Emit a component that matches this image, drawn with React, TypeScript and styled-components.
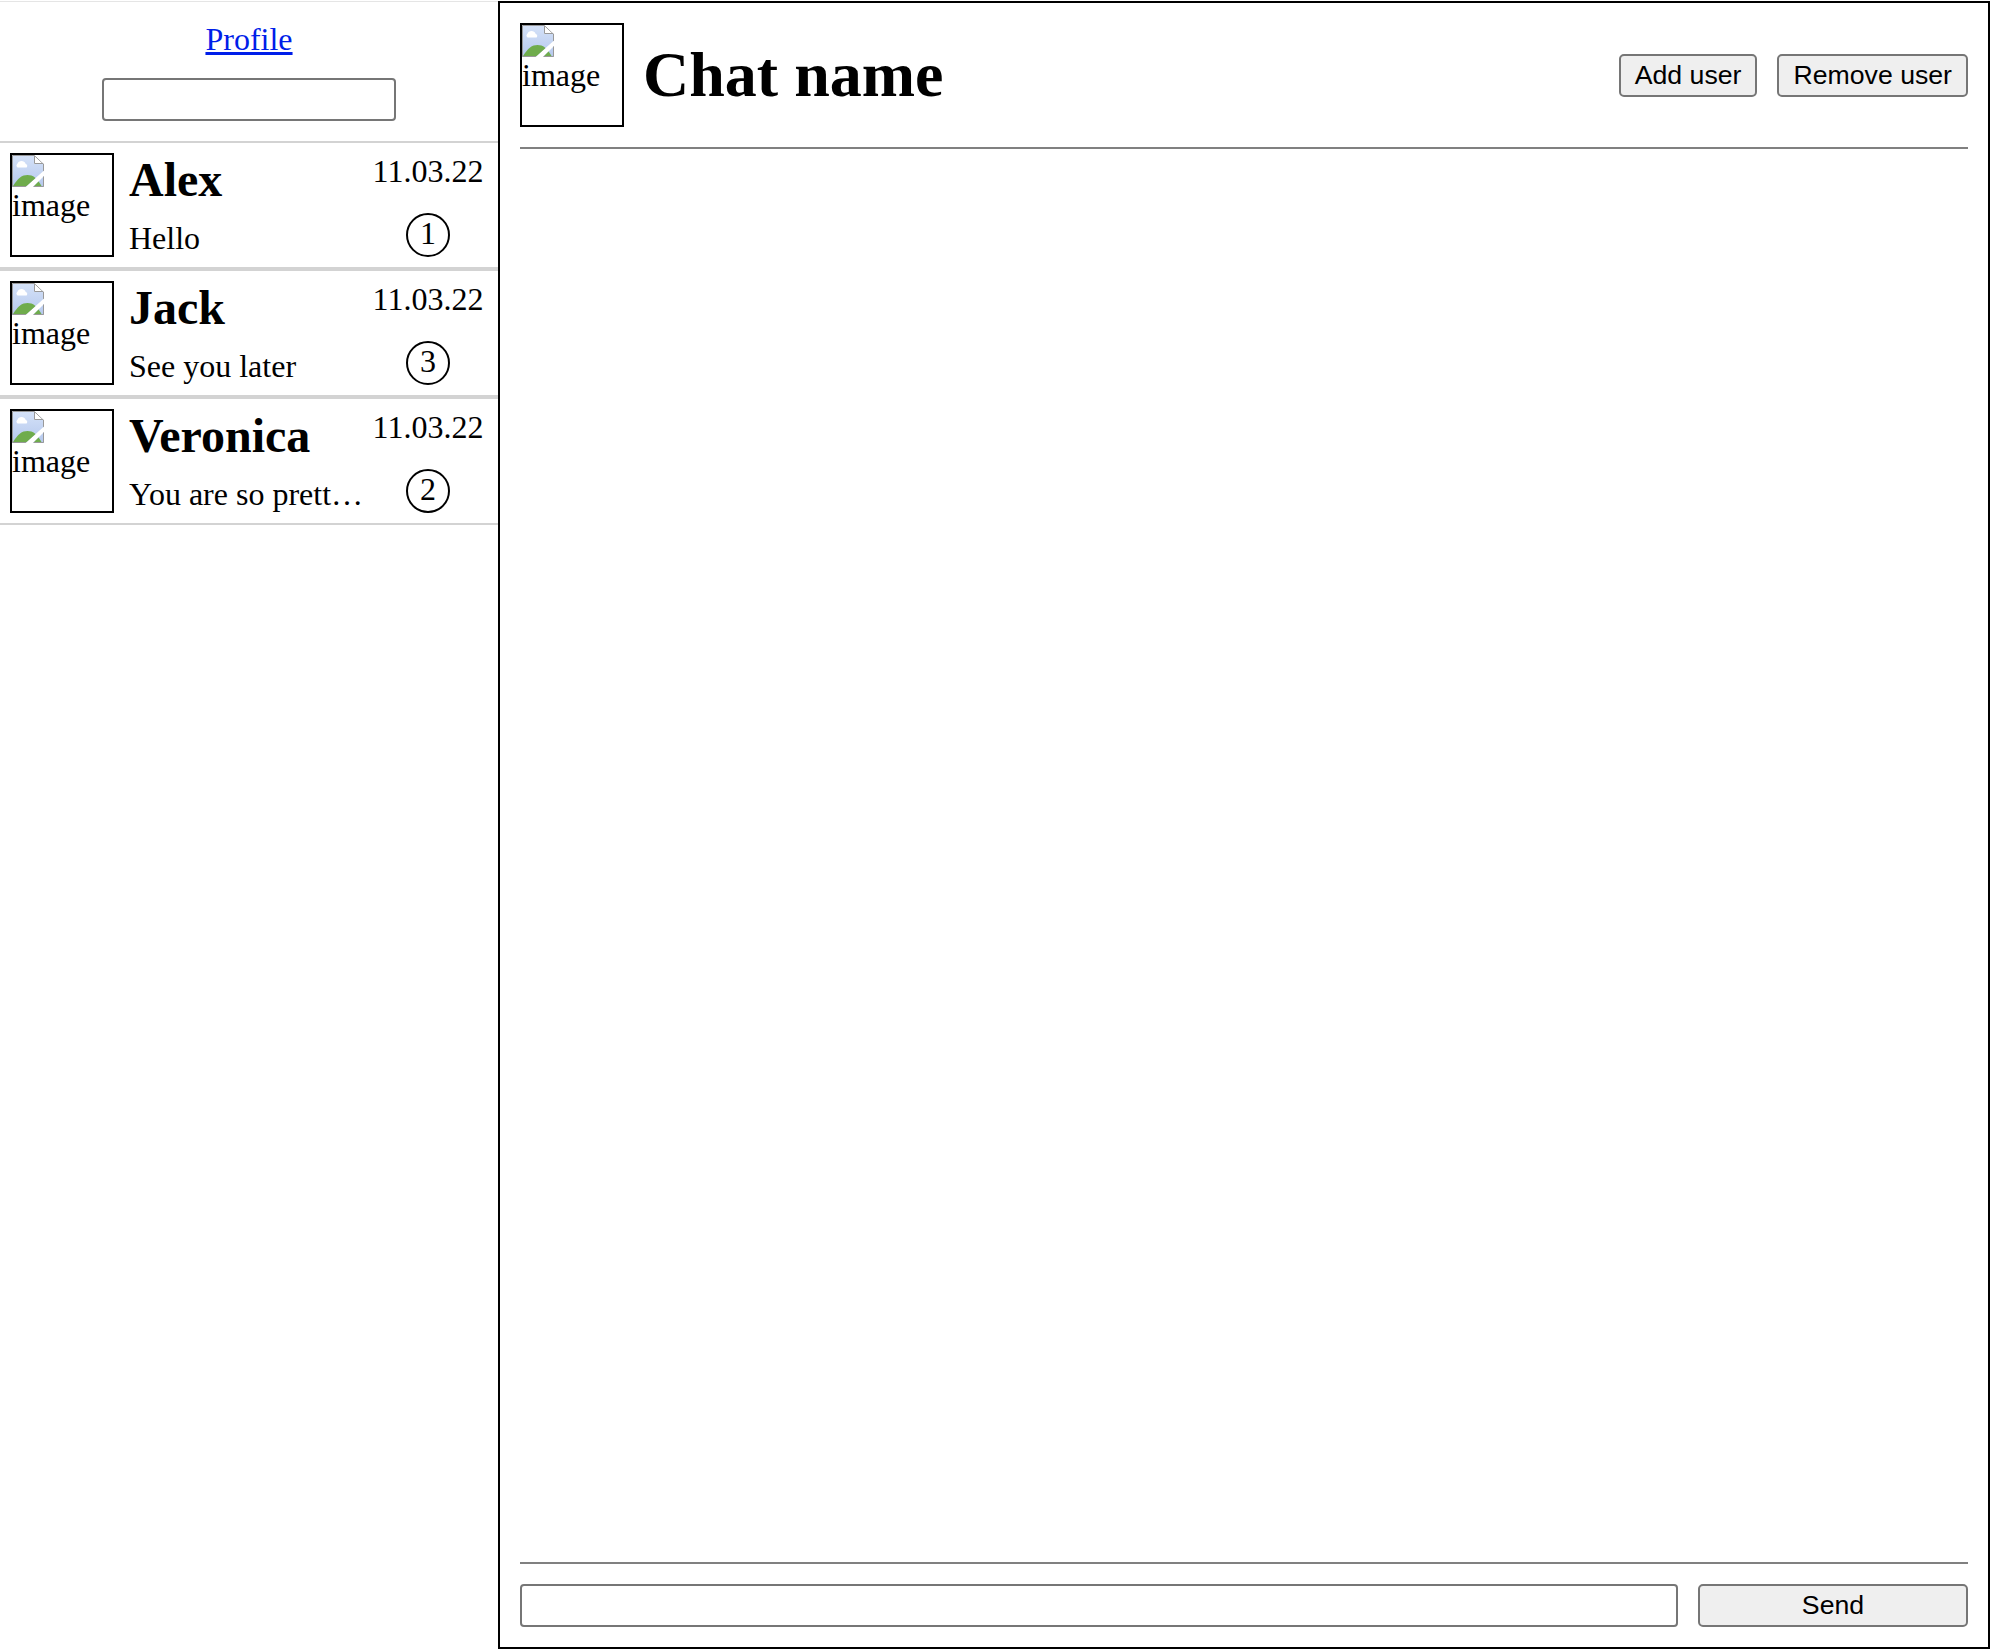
import React from 'react';
import styled, { createGlobalStyle } from 'styled-components';

const GlobalStyle = createGlobalStyle`
  *, *::before, *::after { box-sizing: border-box; }
  body {
    margin: 0;
    background: #fff;
    color: #000;
    font-family: "Liberation Serif", "Times New Roman", serif;
    font-size: 32px;
    line-height: 36px;
  }
`;

const Page = styled.div`
  display: grid;
  grid-template-columns: 498px 1fr;
  height: 1649px;
  padding-top: 1px;
`;

const Sidebar = styled.aside`
  display: flex;
  flex-direction: column;
  border-top: 1px solid #e5e5e5;
`;

const SidebarTop = styled.div`
  display: flex;
  flex-direction: column;
  align-items: center;
  gap: 21px;
  padding: 19px 0 20px;
`;

const ProfileLink = styled.a`
  color: #001ee9;
  text-decoration: underline;
  text-decoration-thickness: 3px;
  text-underline-offset: 2px;
`;

const TextField = styled.input<{ $width?: string }>`
  width: ${({ $width }) => $width ?? 'auto'};
  min-width: 0;
  height: 43px;
  padding: 2px 4px;
  border: 2px solid #767676;
  border-radius: 4px;
  background: #fff;
  font: 26.67px "Liberation Sans", Arial, sans-serif;
  outline: none;
`;

const ChatList = styled.ul`
  margin: 0;
  padding: 0;
  list-style: none;
`;

const ChatItem = styled.li`
  display: flex;
  height: 128px;
  padding: 10px 14px 10px 10px;
  border: solid #d3d3d3;
  border-width: 2px 0;
`;

const AvatarFrame = styled.div<{ $indent?: number }>`
  flex: none;
  width: 104px;
  height: 104px;
  border: 2px solid #000;
  text-indent: ${({ $indent }) => $indent ?? 0}px;

  svg { display: block; }
`;

const ChatText = styled.div`
  flex: 1;
  min-width: 0;
  display: flex;
  flex-direction: column;
  justify-content: space-between;
  padding-bottom: 1px;
  margin-left: 15px;
`;

const ChatTitle = styled.h2`
  margin: 0;
  font-size: 48px;
  line-height: 54px;
`;

const LastMessage = styled.p`
  margin: 0;
  overflow: hidden;
  white-space: nowrap;
  text-overflow: ellipsis;
`;

const ChatMeta = styled.div`
  flex: none;
  width: 112px;
  display: flex;
  flex-direction: column;
  align-items: center;
  justify-content: space-between;
`;

const Unread = styled.span`
  width: 44px;
  height: 44px;
  border: 2px solid #000;
  border-radius: 50%;
  text-align: center;
`;

const Chat = styled.main`
  display: flex;
  flex-direction: column;
  border: 2px solid #000;
  padding: 20px;
`;

const ChatHeader = styled.header`
  display: flex;
  align-items: center;
  gap: 20px;
  padding-bottom: 20px;
  border-bottom: 2px solid #808080;
`;

const ChatName = styled.h1`
  flex: 1;
  margin: 0 0 0 -1px;
  font-size: 64px;
  line-height: 72px;
`;

const Messages = styled.section`
  flex: 1;
`;

const Composer = styled.form`
  display: grid;
  grid-template-columns: 1fr 270px;
  gap: 20px;
  padding-top: 20px;
  border-top: 2px solid #808080;
`;

const Button = styled.button`
  height: 43px;
  padding: 0 14px 1px;
  border: 2px solid #767676;
  border-radius: 5px;
  background: #efefef;
  color: #000;
  font: 26.67px "Liberation Sans", Arial, sans-serif;
`;

const HeaderButton = styled(Button)`
  margin-top: 1px;
`;

function Avatar({ indent }: { indent?: number }) {
  return (
    <AvatarFrame $indent={indent}>
      <svg width="32" height="32" viewBox="0 0 32 32" aria-hidden="true">
        <defs>
          <linearGradient id="sky" x1="0" y1="0" x2="0" y2="1">
            <stop offset="0" stopColor="#d5e2f8" />
            <stop offset="1" stopColor="#b5c8ed" />
          </linearGradient>
          <clipPath id="sheet">
            <path d="M0 0H22.5L32 9V15.5L13.5 32H0ZM32 21V32H21Z" />
          </clipPath>
        </defs>
        <g clipPath="url(#sheet)">
          <path d="M0 0H22L32 9V32H0Z" fill="url(#sky)" />
          <path d="M1 31C6 23 10 20 15.5 20S25 23 29.5 31Z" fill="#6fac4c" />
          <path
            d="M5.5 12.6A2.6 2.6 0 0 1 5.4 8.8A4.4 4.4 0 0 1 13.6 8.8A2.6 2.6 0 0 1 14.6 12.6Z"
            fill="#fff"
          />
          <path d="M22 0L32 9H22Z" fill="#fff" />
          <path d="M.5 .5H22.3L31.5 9V31.5H.5Z" fill="none" stroke="#999" />
          <path d="M22.5 .5V8.5H31.5" fill="none" stroke="#999" />
        </g>
      </svg>
      image
    </AvatarFrame>
  );
}

const chats = [
  { name: 'Alex', message: 'Hello', date: '11.03.22', unread: 1 },
  { name: 'Jack', message: 'See you later', date: '11.03.22', unread: 3 },
  { name: 'Veronica', message: 'You are so prett…', date: '11.03.22', unread: 2 },
];

export default function App() {
  return (
    <>
      <GlobalStyle />
      <Page>
        <Sidebar>
          <SidebarTop>
            <ProfileLink href="#">Profile</ProfileLink>
            <TextField $width="294px" aria-label="Search" />
          </SidebarTop>
          <ChatList>
            {chats.map((chat) => (
              <ChatItem key={chat.name}>
                <Avatar />
                <ChatText>
                  <ChatTitle>{chat.name}</ChatTitle>
                  <LastMessage>{chat.message}</LastMessage>
                </ChatText>
                <ChatMeta>
                  <time>{chat.date}</time>
                  <Unread>{chat.unread}</Unread>
                </ChatMeta>
              </ChatItem>
            ))}
          </ChatList>
        </Sidebar>
        <Chat>
          <ChatHeader>
            <Avatar indent={-1} />
            <ChatName>Chat name</ChatName>
            <HeaderButton type="button">Add user</HeaderButton>
            <HeaderButton type="button">Remove user</HeaderButton>
          </ChatHeader>
          <Messages />
          <Composer>
            <TextField aria-label="Message" />
            <Button type="button">Send</Button>
          </Composer>
        </Chat>
      </Page>
    </>
  );
}
